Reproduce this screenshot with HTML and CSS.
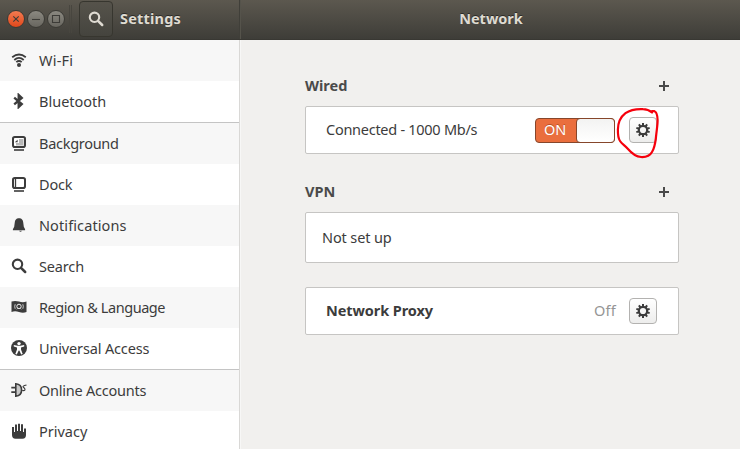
FILE: index.html
```html
<!DOCTYPE html>
<html lang="en">
<head>
<meta charset="utf-8">
<title>Settings</title>
<link rel="stylesheet" href="styles.css">
</head>
<body>
<svg class="defs" width="0" height="0" aria-hidden="true">
  <symbol id="search" viewBox="0 0 16 16"><circle cx="6.5" cy="6.3" r="4.7" fill="none" stroke="currentColor" stroke-width="2.1"/><path d="M10 9.8l4.200 4.200" stroke="currentColor" stroke-width="2.5" stroke-linecap="round"/></symbol>
  <symbol id="gear" viewBox="0 0 16 16"><circle cx="8" cy="8" r="4.200" fill="none" stroke="currentColor" stroke-width="2.200"/><g stroke="currentColor" stroke-width="2"><path d="M8 1v2.600M8 12.400v2.600"/><path d="M8 1v2.600M8 12.400v2.600" transform="rotate(36 8 8)"/><path d="M8 1v2.600M8 12.400v2.600" transform="rotate(72 8 8)"/><path d="M8 1v2.600M8 12.400v2.600" transform="rotate(108 8 8)"/><path d="M8 1v2.600M8 12.400v2.600" transform="rotate(144 8 8)"/></g></symbol>
  <symbol id="plus" viewBox="0 0 10 10"><path d="M5 0v10M0 5h10" stroke="currentColor" stroke-width="2"/></symbol>
</svg>
<header class="bar">
  <div class="bar-left">
    <div class="window-buttons">
      <span class="wbtn close"><svg viewBox="0 0 16 16"><path d="M5.3 5.3l5.4 5.4M10.7 5.3l-5.4 5.4"/></svg></span>
      <span class="wbtn"><svg viewBox="0 0 16 16"><path d="M4 8.5h8"/></svg></span>
      <span class="wbtn"><svg viewBox="0 0 16 16"><path d="M4.5 4.5h7v7h-7z"/></svg></span>
    </div>
    <span class="bar-sep"></span>
    <button class="search-btn"><svg class="icon"><use href="#search"/></svg></button>
    <h1 class="title settings">Settings</h1>
  </div>
  <h2 class="title network">Network</h2>
</header>
<main class="body">
  <nav class="sidebar">
    <a class="row alt"><svg class="icon" viewBox="0 0 16 16"><g fill="none" stroke="currentColor" stroke-width="1.8"><path d="M1.200 5.200Q8-.2 14.800 5.200M3.300 8Q8 3.700 12.700 8M5.300 10.200Q8 7.800 10.700 10.200"/></g><circle cx="8" cy="13" r="2" fill="currentColor"/></svg><span class="wifi">Wi-Fi</span></a>
    <a class="row group-end"><svg class="icon" viewBox="0 0 16 16"><path d="M3.200 4.600l7.600 6.500L7.700 14V2l3.100 2.900-7.600 6.500" fill="none" stroke="currentColor" stroke-width="2.300"/></svg><span class="bluetooth">Bluetooth</span></a>
    <a class="row alt"><svg class="icon" viewBox="0 0 16 16"><rect x="2" y="2" width="12" height="10" rx="1.800" fill="#fff" stroke="currentColor" stroke-width="2"/><path d="M8 4h4.500v6.500H5V8h3z" fill="#b8b8b8"/><path d="M3.800 7.300l2.800-2.600v2.600z" fill="currentColor"/><path d="M3 15h10" stroke="currentColor" stroke-width="1.600"/></svg><span class="background">Background</span></a>
    <a class="row"><svg class="icon" viewBox="0 0 16 16"><rect x="2" y="2" width="12" height="10" rx="1.800" fill="#fff" stroke="currentColor" stroke-width="2"/><path d="M4.500 3v8" stroke="currentColor" stroke-width="1.300"/><path d="M3 15h10" stroke="currentColor" stroke-width="1.600"/></svg><span class="dock">Dock</span></a>
    <a class="row alt"><svg class="icon" viewBox="0 0 16 16"><path d="M7 1.200h2c2 .5 3 2 3.200 4l.6 4.500 1.300 2.500v1H1.900v-1l1.300-2.500.6-4.500C4 3.200 5 1.700 7 1.200z" fill="currentColor"/><path d="M8 13.700h3q-1.500 2-3 0z" fill="currentColor"/></svg><span class="notifications">Notifications</span></a>
    <a class="row"><svg class="icon"><use href="#search"/></svg><span class="search">Search</span></a>
    <a class="row alt"><svg class="icon" viewBox="0 0 16 16"><path d="M.5 2.600Q4 1.300 8 2.600T15.500 2.500V13Q12 14.300 8 13T.5 13z" fill="currentColor"/><g fill="none" stroke="#eee"><circle cx="8" cy="7.400" r="2.200"/><path d="M4.200 5.200q-1 2.300 0 4.600M11.800 5.200q1 2.300 0 4.600M5.800 10.300l1-1M10.200 10.300l-1-1" stroke-width=".8"/></g></svg><span class="region">Region &amp; Language</span></a>
    <a class="row group-end"><svg class="icon" viewBox="0 0 16 16"><circle cx="8" cy="8" r="8" fill="currentColor"/><circle cx="8" cy="3.600" r="1.700" fill="#fff"/><path d="M2.800 5l3.800.8h2.800l3.800-.8v1.400l-3.200 1.200v2l1.700 4.300-1.500.6L8.300 10.600h-.6L5.800 14.500l-1.500-.6L6 9.600v-2L2.800 6.400z" fill="#fff"/></svg><span class="universal">Universal Access</span></a>
    <a class="row alt"><svg class="icon" viewBox="0 0 16 16"><path d="M4.800 1.800q5.800.5 5.800 6.200t-5.800 6.200z" fill="#c8c8c8" stroke="currentColor" stroke-width="1.600"/><path d="M.3 5.700H5M.3 10.200H5" stroke="currentColor" stroke-width="1.700"/><path d="M11.200 8.500q2.800.5 2.800-.9T12.400 5.200 15.500 3" fill="none" stroke="currentColor" stroke-width="1.100"/></svg><span class="online">Online Accounts</span></a>
    <a class="row"><svg class="icon" viewBox="0 0 16 16"><path d="M1 4h2v5h1V1.500h2V8h1V.8h2V8h1V1.200h2V9h1V5.500h2V12q0 3.700-3.500 3.700h-7Q1 15.700 1 12z" fill="currentColor"/></svg><span class="privacy">Privacy</span></a>
  </nav>
  <section class="content">
    <div class="section-head wired-head"><h3 class="wired">Wired</h3><svg class="plus"><use href="#plus"/></svg></div>
    <div class="card">
      <span class="label connected">Connected - 1000 Mb/s</span>
      <div class="switch"><span class="on">ON</span><span class="knob"></span></div>
      <button class="gear-btn"><svg class="icon"><use href="#gear"/></svg>
        <svg class="marker" viewBox="0 0 44 54"><path d="M36 6.500C33 4 30 3.200 27 3.200C22 3 14 4 9.500 7.200C4.500 11 2 18 1.900 23.500C1.800 28 2 32 4 35C6 38 9 39.500 12 43C15 46.500 20 50.700 25 51C30 51.300 33.500 50.500 36 46C39 41 39.500 35 40 31C40.500 25 41.700 19 41.600 14C41.500 9 40.500 6 38.500 5.200L36 5"/></svg>
      </button>
    </div>
    <div class="section-head vpn-head"><h3 class="vpn">VPN</h3><svg class="plus"><use href="#plus"/></svg></div>
    <div class="card vpn-card"><span class="label notset">Not set up</span></div>
    <div class="card proxy-card">
      <span class="label proxy">Network Proxy</span>
      <span class="off">Off</span>
      <button class="gear-btn"><svg class="icon"><use href="#gear"/></svg></button>
    </div>
  </section>
</main>
</body>
</html>
```
FILE: styles.css
```css
* { box-sizing: border-box; }
body {
  margin: 0;
  width: 740px;
  height: 449px;
  overflow: hidden;
  display: flex;
  flex-direction: column;
  background: #f1f0ee;
  color: #3c3c3c;
  font: 14.5px/20px "Noto Sans", sans-serif;
}
h1, h2, h3 { margin: 0; font: inherit; font-weight: 700; }
button { padding: 0; font: inherit; color: inherit; }
.defs { position: absolute; }
.icon { width: 16px; height: 16px; flex: none; display: block; }
span { white-space: nowrap; }

.bar {
  height: 40px;
  flex: none;
  display: flex;
  background: linear-gradient(#5c584f, #3e3d38);
  border-bottom: 1px solid #393833;
}
.bar-left {
  width: 241px;
  display: flex;
  align-items: center;
  padding: 0 0 2px 7px;
  border-right: 1px solid #55534b;
  box-shadow: inset -1px 0 #403f39;
}
.window-buttons { display: flex; gap: 2px; padding-top: 1px; }
.wbtn {
  width: 18px;
  height: 18px;
  border: 1px solid #3b3a35;
  border-radius: 50%;
  background: linear-gradient(#8b8981, #68665f);
}
.wbtn svg { display: block; width: 16px; height: 16px; fill: none; stroke: #3d3c38; stroke-width: 1.1; }
.close { background: linear-gradient(#f37b51, #e0481b); }
.bar-sep { width: 3px; height: 28px; margin-left: 4px; border: solid #48463f; border-width: 0 1px; }
.search-btn {
  width: 34px;
  height: 36px;
  margin: 0 0 0 7px;
  border: 1px solid #37362f;
  border-radius: 4px;
  background: linear-gradient(#56534b, #45443e);
  color: #dfdbd2;
  display: grid;
  place-items: center;
}
.title { color: #dfdbd2; text-shadow: 0 -1px #2c2b28; white-space: nowrap; }
.settings { margin-left: 7px; padding-bottom: 2px; letter-spacing: .2px; }
.network { flex: 1; text-align: center; padding: 8px 0 0 1px; }

.body { flex: 1; min-height: 0; display: flex; }
.sidebar { width: 240px; flex: none; background: #fff; border-right: 1px solid #d9d8d6; box-shadow: 1px 0 #f7f7f6; overflow: hidden; }
.row { height: 41px; display: flex; align-items: center; gap: 12px; padding: 0 0 1px 11px; background: #fff; }
.row.alt { background: #f7f7f7; }
.row.group-end { height: 42px; border-bottom: 1px solid #c4c4c4; }
.wifi { letter-spacing: .2px; }
.background { letter-spacing: -.28px; }
.dock { letter-spacing: -.15px; }
.notifications { letter-spacing: .1px; }
.search { letter-spacing: -.15px; }
.region { letter-spacing: -.44px; }
.universal { letter-spacing: -.15px; }
.online { letter-spacing: -.23px; }

.content { width: 374px; margin-left: 65px; }
.section-head { height: 20px; display: flex; justify-content: space-between; align-items: center; padding-right: 10px; color: #4a4a4a; }
.section-head h3 { padding-bottom: 2px; }
.wired-head { margin: 36px 0 10px; }
.vpn-head { margin: 28px 0 10px; }
.plus { width: 10px; height: 10px; }
.card {
  height: 48px;
  display: flex;
  align-items: center;
  padding: 0 21px 0 20px;
  border: 1px solid #c6c5c3;
  border-radius: 2px;
  background: #fff;
}
.label { flex: 1; padding-bottom: 2px; }
.connected { letter-spacing: -.27px; }
.notset { letter-spacing: -.12px; }
.vpn-card { height: 51px; padding-left: 16px; }
.proxy-card { margin-top: 24px; }
.proxy { font-weight: 700; letter-spacing: -.08px; }
.off { color: #959595; margin-right: 13px; padding-bottom: 2px; letter-spacing: .2px; }
.switch {
  width: 80px;
  height: 25px;
  margin-right: 14px;
  border: 1px solid #86462b;
  border-radius: 4px;
  background: #ea6e3d;
  display: flex;
  justify-content: space-between;
  align-items: center;
  color: #fff;
}
.on { padding: 0 0 2px 8px; text-shadow: 0 -1px #b9512a; }
.knob { width: 39px; height: 25px; margin: -1px; border: 1px solid #86462b; border-radius: 4px; background: linear-gradient(#f3f3f2, #fff); }
.gear-btn {
  position: relative;
  width: 28px;
  height: 26px;
  border: 1px solid #b3b2b0;
  border-radius: 4px;
  background: linear-gradient(#fff, #ededec);
  display: grid;
  place-items: center;
}
.marker { position: absolute; left: -14px; top: -12px; width: 44px; height: 54px; fill: none; stroke: #f6000c; stroke-width: 2.2; stroke-linecap: round; stroke-linejoin: round; }
```
